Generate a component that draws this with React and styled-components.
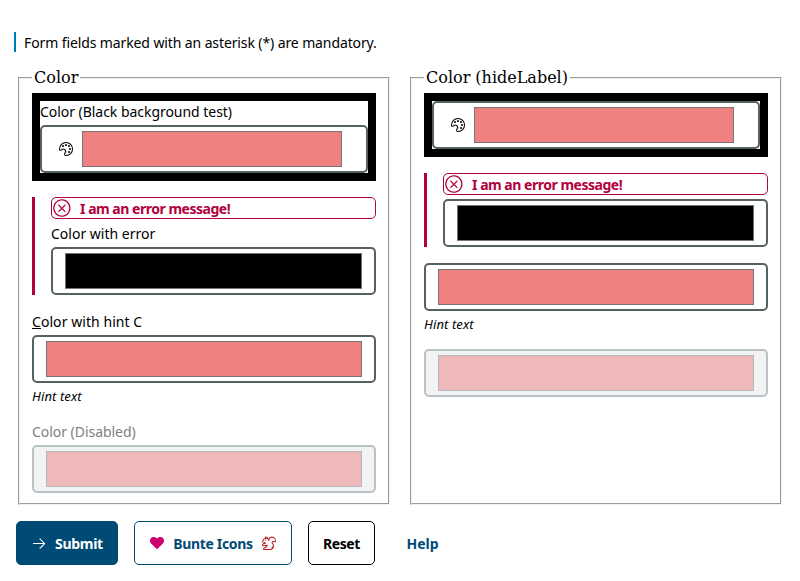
import React from 'react';
import styled, { createGlobalStyle } from 'styled-components';
import { VscSymbolColor, VscArrowRight, VscError, VscHeartFilled, VscSquirrel } from 'react-icons/vsc';

const GlobalStyle = createGlobalStyle`
  *, *::before, *::after { box-sizing: border-box; }
  body {
    margin: 0;
    background: #fff;
    color: #000;
    font-family: "Noto Sans", "Open Sans", sans-serif;
    font-size: 14px;
  }
`;

const Page = styled.main`
  padding: 32px 16px 16px 14px;
`;

const Notice = styled.p`
  margin: 0;
  height: 20px;
  padding-left: 8px;
  border-left: 2px solid #0077b6;
  line-height: 21px;
  font-size: 14px;
`;

const Text = styled.span`
  display: inline-block;
  white-space: nowrap;
  letter-spacing: ${({ $track }) => $track || 0}px;
`;

const Columns = styled.div`
  display: grid;
  grid-template-columns: 372px 372px;
  gap: 20px;
  margin: 16px 0 0 4px;
`;

const Fieldset = styled.fieldset`
  min-width: 0;
  height: 437px;
  margin: 0;
  padding: 6px 12px 10px;
  border: 2px groove rgb(240, 240, 240);
`;

const Legend = styled.legend`
  height: 19px;
  padding: 0 2px;
  font-family: "DejaVu Serif", serif;
  font-size: 16px;
  line-height: 19px;
`;

const Stack = styled.div`
  display: flex;
  flex-direction: column;
  gap: 16px;
`;

const Field = styled.div`
  display: flex;
  flex-direction: column;
`;

const BlackFrame = styled(Field)`
  border: 8px solid #000;
`;

const ErrorField = styled(Field)`
  border-left: 3px solid #b3003f;
  padding-left: 16px;
`;

const Label = styled.label`
  height: 24px;
  line-height: 21px;
  color: ${({ $muted }) => ($muted ? '#808080' : '#000')};
`;

const ErrorMessage = styled.div`
  display: flex;
  align-items: center;
  gap: 8px;
  height: 22px;
  margin-bottom: 4px;
  border: 1px solid #b3003f;
  border-radius: 5px;
  color: #b3003f;
  font-weight: 700;
  line-height: 20px;

  svg { width: 20px; height: 20px; flex: none; }
  span { padding-top: 1px; }
`;

const Control = styled.div`
  display: flex;
  align-items: center;
  height: 48px;
  padding: 0 ${({ $icon }) => ($icon ? '24px 0 16px' : '12px')};
  border: 2px solid ${({ $disabled }) => ($disabled ? '#bac2c5' : '#576164')};
  border-radius: 5px;
  background: ${({ $disabled }) => ($disabled ? '#f1f3f5' : '#fff')};

  svg { width: 16px; height: 16px; margin-right: 8px; flex: none; }
`;

const Swatch = styled.div`
  flex: 1;
  height: 36px;
  border: 1px solid ${({ $disabled }) => ($disabled ? '#b5b9bb' : '#777')};
  background: ${({ $color }) => $color};
`;

const Hint = styled.div`
  height: 22px;
  padding-top: 4px;
  font-size: 13px;
  font-style: italic;
  line-height: 18px;
`;

const Actions = styled.div`
  display: flex;
  gap: 16px;
  margin: 16px 0 0 2px;
`;

const looks = {
  primary: 'background: #004b76; border-color: #004b76; color: #fff;',
  secondary: 'border-color: #004b76; color: #004b76;',
  normal: 'border-color: #000; color: #000;',
  ghost: 'border-color: transparent; color: #004b76;',
};

const Button = styled.button`
  display: flex;
  align-items: center;
  justify-content: center;
  gap: 8px;
  width: ${({ $width }) => $width}px;
  height: 44px;
  padding: 0;
  border: 1px solid;
  border-radius: 5px;
  background: #fff;
  font: 700 14px "Noto Sans", sans-serif;
  ${({ $look }) => looks[$look]}

  svg { width: 16px; height: 16px; flex: none; }
`;

function ColorControl({ icon, color = '#f08080', disabled }) {
  return (
    <Control $icon={icon} $disabled={disabled}>
      {icon && <VscSymbolColor />}
      <Swatch $color={disabled ? '#efb9b9' : color} $disabled={disabled} />
    </Control>
  );
}

function FieldError() {
  return (
    <ErrorMessage>
      <VscError />
      <Text $track={-0.48}>I am an error message!</Text>
    </ErrorMessage>
  );
}

export default function App() {
  return (
    <>
      <GlobalStyle />
      <Page>
        <Notice><Text $track={-0.11}>Form fields marked with an asterisk (*) are mandatory.</Text></Notice>
        <Columns>
          <Fieldset>
            <Legend>Color</Legend>
            <Stack>
              <BlackFrame>
                <Label><Text $track={-0.04}>Color (Black background test)</Text></Label>
                <ColorControl icon />
              </BlackFrame>
              <ErrorField>
                <FieldError />
                <Label><Text>Color with error</Text></Label>
                <ColorControl color="#000" />
              </ErrorField>
              <Field>
                <Label><Text $track={0.06}><u>C</u>olor with hint C</Text></Label>
                <ColorControl />
                <Hint><Text $track={0.1}>Hint text</Text></Hint>
              </Field>
              <Field>
                <Label $muted><Text $track={-0.04}>Color (Disabled)</Text></Label>
                <ColorControl disabled />
              </Field>
            </Stack>
          </Fieldset>
          <Fieldset>
            <Legend>Color (hideLabel)</Legend>
            <Stack>
              <BlackFrame><ColorControl icon /></BlackFrame>
              <ErrorField>
                <FieldError />
                <ColorControl color="#000" />
              </ErrorField>
              <Field>
                <ColorControl />
                <Hint><Text $track={0.1}>Hint text</Text></Hint>
              </Field>
              <Field><ColorControl disabled /></Field>
            </Stack>
          </Fieldset>
        </Columns>
        <Actions>
          <Button $look="primary" $width={102}><VscArrowRight /><Text $track={-0.3}>Submit</Text></Button>
          <Button $look="secondary" $width={158}>
            <VscHeartFilled color="#cc006e" /><Text $track={-0.35}>Bunte Icons</Text><VscSquirrel color="#b81c1c" />
          </Button>
          <Button $look="normal" $width={67}><Text $track={-0.4}>Reset</Text></Button>
          <Button $look="ghost" $width={63}><Text>Help</Text></Button>
        </Actions>
      </Page>
    </>
  );
}
